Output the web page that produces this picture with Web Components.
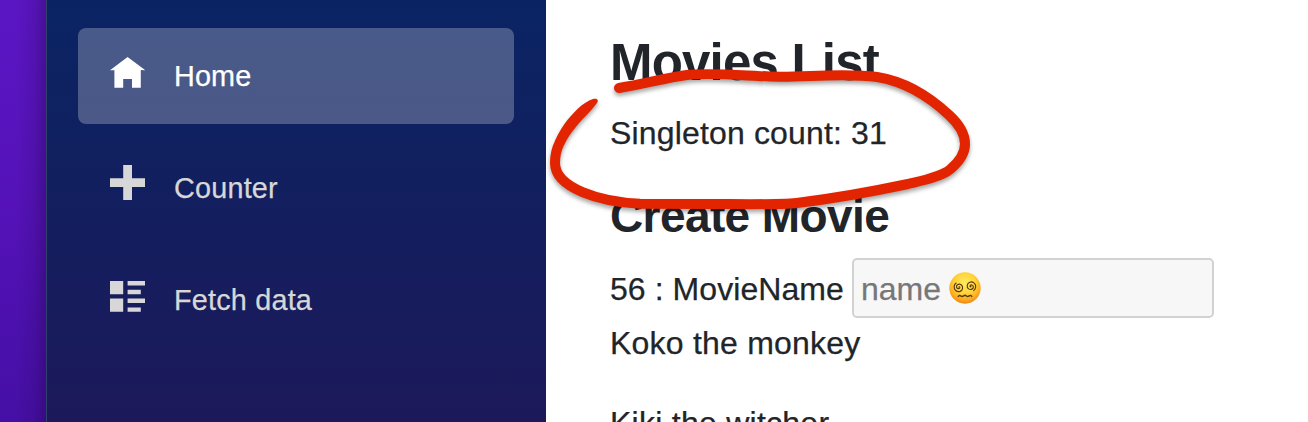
<!DOCTYPE html>
<html lang="en"><head><meta charset="utf-8"><title>Movies List</title>
<style>html,body{margin:0;height:100%;overflow:hidden}body{font-family:"Liberation Sans",Arial,sans-serif;background:#fff}</style></head><body>
<movie-app></movie-app>
<script>
const define=(name,html)=>customElements.define(name,class extends HTMLElement{
  constructor(){super();this.attachShadow({mode:'open'}).innerHTML=html;}
});
const icons={
 home:'M4 0l-4 3h1v4h2v-2h2v2h2v-4.03l1 .03-4-3z',
 plus:'M3 0v3h-3v2h3v3h2v-3h3v-2h-3v-3h-2z',
 list:'M0 0v3h3v-3h-3zm4 0v1h4v-1h-4zm0 2v1h3v-1h-3zm-4 2v3h3v-3h-3zm4 0v1h4v-1h-4zm0 2v1h3v-1h-3z'};
customElements.define('nav-item',class extends HTMLElement{
 constructor(){super();this.attachShadow({mode:'open'});}
 connectedCallback(){this.shadowRoot.innerHTML=`<style>
 :host{display:flex;align-items:center;height:96px;box-sizing:border-box;padding-left:32px;border-radius:8px;color:#d7d7d7;font-size:28.8px}
 :host([active]){background:rgba(255,255,255,.25);color:#fff}
 svg{width:35.2px;height:35.2px;flex:none;margin:var(--icon-shift,-2px) 28.8px 0 0;fill:currentColor}
 span{letter-spacing:var(--track,0);-webkit-text-stroke:.25px currentColor}
 </style><svg viewBox="0 0 8 8"><path d="${icons[this.getAttribute('icon')]}"/></svg><span><slot></slot></span>`;}
});
define('desktop-edge',`<style>:host{display:block;width:46px;background:linear-gradient(90deg,transparent 35%,rgba(35,0,65,.13) 75%,rgba(25,0,45,.3)),linear-gradient(#5b16c4,#5412b8 50%,#450fa5)}</style>`);
define('side-bar',`<style>:host{display:flex;flex-direction:column;gap:16px;box-sizing:border-box;width:500px;padding:28px 32px 0 31px;border-left:1px solid #30416f;background:linear-gradient(#0a2463 0,#141e5e 230px,#1c195a 422px)}</style>
<nav-item icon="home" active style="--icon-shift:-3px;--track:.15px">Home</nav-item><nav-item icon="plus" style="--icon-shift:-11px;--track:.2px">Counter</nav-item><nav-item icon="list" style="--icon-shift:-3px;--track:.2px">Fetch data</nav-item>`);
define('dizzy-face',`<style>:host{display:block;width:32px;height:32px}svg{display:block}</style>
<svg width="32" height="32" viewBox="0 0 32 32"><defs><radialGradient id="g" cx=".5" cy=".35" r=".68"><stop stop-color="#ffec61"/><stop offset=".5" stop-color="#ffd338"/><stop offset=".8" stop-color="#fba51e"/><stop offset="1" stop-color="#e9790b"/></radialGradient></defs>
<circle cx="16" cy="16" r="15.700" fill="url(#g)"/>
<g fill="none" stroke="#59360e" stroke-width="1.150" stroke-linecap="round"><path id="s" d="M9.800 15c.5-.7 1.300.1.9.9-.7 1.300-2.900.9-3.200-.8-.4-2.300 2.500-3.900 4.600-2.400 2.500 1.800 1.800 5.600-1.100 6.700-3 1-6-1.400-5.900-4.400 0-1.700.8-3.100 2-4"/><use href="#s" transform="rotate(180 15.900 14.800)"/><path d="M9.200 24.500q1.400-1.800 2.600-.6t2.800 0 2.800 0 2.800 0 2.600.6" stroke-width="1.400"/></g></svg>`);
define('name-field',`<style>:host{display:flex;align-items:center;box-sizing:border-box;width:362px;height:60px;padding:2px 6.500px 0;border:2px solid #d2d2d2;border-radius:5px;background:#f7f7f7;color:#777;gap:8px}span{-webkit-text-stroke:.25px currentColor}dizzy-face{position:relative;top:-1px}</style><span><slot></slot></span><dizzy-face></dizzy-face>`);
define('hand-circle',`<style>:host{position:absolute;left:0;top:0;pointer-events:none;filter:drop-shadow(0 3px 2px rgba(0,0,0,.35))}svg{display:block}</style>
<svg width="1308" height="422" viewBox="0 0 1308 422"><path d="M619 88C645 84 664 78 687 75C713 72 752 76.500 780 76.700C808 77 845 73 877 77C908 82 933 100 949 115C960 125 965 135 965 144C965 153 959 162 950 169.500C941 177 920 181 908 184C875 191 830 199 796.700 203C780 205 735 204 706.700 204L640 203.700C600 202 555 188 555 163C555 155 556.500 149 559.500 143" fill="none" stroke="#e32400" stroke-width="10" stroke-linecap="round" stroke-linejoin="round"/><path d="M555 141C560 129 568 118 578 108.500C583 104 588 100.500 593 99C597 97.800 599 100 597 103C594 107 590 111.500 585 116.700C578 124 570 133 564 145Z" fill="#e32400"/></svg>`);
define('movie-page',`<style>
:host{display:block;box-sizing:border-box;flex:1;min-width:0;padding:32px 0 0 64px;color:#212529;font-size:32px;line-height:48px}
h1,h2,p{margin:0;white-space:nowrap}h1{font-size:51px;line-height:61px;letter-spacing:-.8px}h2{font-size:46px;line-height:55px;margin-top:32px;letter-spacing:-.6px}
p{letter-spacing:.13px;-webkit-text-stroke:.25px currentColor}
.count{margin-top:16px}.row{display:flex;height:60px;gap:8.500px;align-items:center;margin-top:14px}.row p{letter-spacing:.07px;padding-top:2px}.koko{margin-top:1px}.kiki{margin-top:32px}</style>
<h1>Movies List</h1><p class="count" style="letter-spacing:.16px">Singleton count: 31</p><h2>Create Movie</h2><div class="row"><p>56 : MovieName</p><name-field>name</name-field></div><p class="koko" style="letter-spacing:.22px">Koko the monkey</p><p class="kiki" style="letter-spacing:.26px">Kiki the witcher</p>`);
define('movie-app',`<style>:host{display:flex;position:relative;width:1308px;height:422px;overflow:hidden}</style><desktop-edge></desktop-edge><side-bar></side-bar><movie-page></movie-page><hand-circle></hand-circle>`);
</script></body></html>
